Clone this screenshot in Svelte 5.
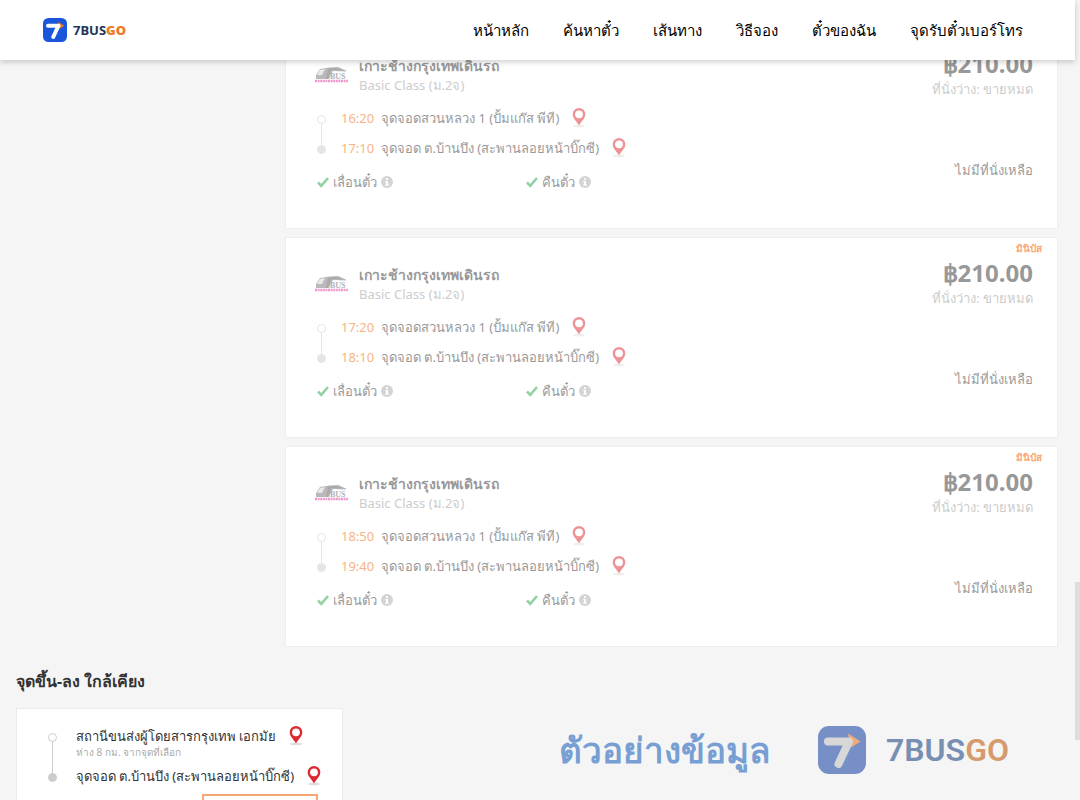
<script>
	const menu = ['หน้าหลัก', 'ค้นหาตั๋ว', 'เส้นทาง', 'วิธีจอง', 'ตั๋วของฉัน', 'จุดรับตั๋วเบอร์โทร'];

	const from = 'จุดจอดสวนหลวง 1 (ปั้มแก๊ส พีที)';
	const to = 'จุดจอด ต.บ้านบึง (สะพานลอยหน้าบิ๊กซี)';

	const trips = [
		{ depart: '16:20', arrive: '17:10' },
		{ depart: '17:20', arrive: '18:10' },
		{ depart: '18:50', arrive: '19:40' }
	];
</script>

{#snippet logo()}
	<svg class="logo-icon" viewBox="0 0 48 48" aria-hidden="true">
		<rect class="tile" width="48" height="48" rx="11" />
		<path d="M30 7.500l12.500 8-9.500 6z" fill="#f07a26" />
		<path class="seven" d="M10 15.500h21L20.500 38" fill="none" stroke-width="8" stroke-linecap="round" stroke-linejoin="round" />
	</svg>
{/snippet}

{#snippet pin()}
	<a class="pin" href="#map" aria-label="แผนที่">
		<svg viewBox="0 0 14 20">
			<ellipse cx="7" cy="18" rx="6" ry="1.5" fill="#e4dcda" />
			<path d="M7 0a6.300 6.300 0 0 0-6.300 6.300c0 4.200 3.800 6.700 6.300 11.200 2.500-4.500 6.300-7 6.300-11.200A6.300 6.300 0 0 0 7 0z" fill="#dc2a30" />
			<circle cx="7" cy="6.300" r="3.900" fill="#fff" />
		</svg>
	</a>
{/snippet}

{#snippet perk(label)}
	<div class="perk">
		<svg class="check" viewBox="0 0 12 12"><path d="M1 6.500l3.300 3.300L11 2" fill="none" stroke="#28a745" stroke-width="2.600" /></svg>
		<span>{label}</span>
		<svg class="info" viewBox="0 0 12 12">
			<circle cx="6" cy="6" r="6" fill="#aaa" />
			<path d="M5 2.300h2v1.700H5zM4.300 5H7v3.500h.8v1.200H4.200V8.500H5V6.200h-.7z" fill="#fff" />
		</svg>
	</div>
{/snippet}

<div class="page">
	<header>
		<a class="brand" href="#home">
			{@render logo()}
			<span>7BUS<b>GO</b></span>
		</a>
		<nav>
			{#each menu as item}
				<a href="#menu">{item}</a>
			{/each}
		</nav>
	</header>

	<main>
		<section class="results">
			{#each trips as trip}
				<article class="trip">
					<span class="type">มินิบัส</span>
					<div class="info-col">
						<div class="operator">
							<svg class="bus" viewBox="0 0 34 18" aria-hidden="true">
								<path d="M1 13V9L5 3l9-1.500 9-.5 8 3.500v1L18 5l-4 8z" fill="#77747a" />
								<path d="M5 4l5-1-3 6H2.500V8z" fill="#d5d3d7" />
								<path d="M13 2.500l8-.5 8 2.500-13-.5-3 9h-2z" fill="#555357" />
								<text x="15" y="12.500" font-size="8" font-weight="700" font-family="Liberation Serif, serif" fill="#66636a">BUS</text>
								<path d="M0 15h33" stroke="#e0359c" stroke-width="2.500" stroke-dasharray="2 .6" />
							</svg>
							<div>
								<h3>เกาะช้างกรุงเทพเดินรถ</h3>
								<p>Basic Class (ม.2จ)</p>
							</div>
						</div>
						<ol class="route">
							<li><time>{trip.depart}</time><span>{from}</span>{@render pin()}</li>
							<li><time>{trip.arrive}</time><span>{to}</span>{@render pin()}</li>
						</ol>
						<div class="perks">
							{@render perk('เลื่อนตั๋ว')}
							{@render perk('คืนตั๋ว')}
						</div>
					</div>
					<div class="fare">
						<strong>฿210.00</strong>
						<span class="seats">ที่นั่งว่าง: ขายหมด</span>
						<span class="sold-out">ไม่มีที่นั่งเหลือ</span>
					</div>
				</article>
			{/each}
		</section>

		<section class="nearby">
			<h2>จุดขึ้น-ลง ใกล้เคียง</h2>
			<div class="near-card">
				<ol class="route">
					<li>
						<span>สถานีขนส่งผู้โดยสารกรุงเทพ เอกมัย</span>{@render pin()}
						<small>ห่าง 8 กม. จากจุดที่เลือก</small>
					</li>
					<li><span>{to}</span>{@render pin()}</li>
				</ol>
				<button aria-label="ค้นหา"></button>
			</div>
		</section>
	</main>

	<div class="watermark">
		<span class="sample">ตัวอย่างข้อมูล</span>
		{@render logo()}
		<span class="name">7BUS<b>GO</b></span>
	</div>
	<div class="scrollbar"></div>
</div>

<style>
	:global(body) {
		background: #f5f5f5;
		font-family: 'Noto Sans', 'Open Sans', sans-serif;
		color: #333;
	}

	.page {
		position: relative;
		height: 100vh;
		overflow: hidden;
		font-size: 13px;
	}

	a {
		color: inherit;
		text-decoration: none;
	}

	h2, h3, p, ol {
		margin: 0;
		padding: 0;
	}

	header {
		position: absolute;
		top: 0;
		left: 0;
		right: 5px;
		z-index: 2;
		box-sizing: border-box;
		height: 60px;
		padding: 0 52px 0 43px;
		display: flex;
		align-items: center;
		justify-content: space-between;
		background: #fff;
		box-shadow: 0 2px 6px rgba(0, 0, 0, 0.2);
	}

	.brand {
		display: flex;
		align-items: center;
		gap: 6px;
		font-size: 13px;
		font-weight: 700;
		color: #1c3556;
	}

	.logo-icon {
		width: 24px;
		height: 24px;
	}

	.tile {
		fill: #1a56db;
	}

	.seven {
		stroke: #fff;
	}

	.brand b {
		color: #f07a26;
	}

	nav {
		display: flex;
		gap: 34px;
		font-size: 15px;
		line-height: 22px;
		color: #000;
	}

	main {
		padding: 28px 22px 0 16px;
	}

	.results {
		margin-left: 269px;
		display: grid;
		gap: 8px;
	}

	.trip {
		position: relative;
		box-sizing: border-box;
		height: 201px;
		padding: 27px 24px 0 29px;
		display: flex;
		justify-content: space-between;
		background: #fff;
		border: 1px solid #eee;
	}

	.type {
		position: absolute;
		top: 1px;
		right: 15px;
		font-size: 10px;
		line-height: 18px;
		font-weight: 700;
		color: #f9a878;
	}

	.info-col, .fare {
		opacity: 0.5;
	}

	.info-col {
		flex: 1;
	}

	.operator {
		display: flex;
		align-items: center;
		gap: 10px;
	}

	.bus {
		width: 34px;
		height: 18px;
	}

	h3 {
		font-size: 14px;
		line-height: 20px;
	}

	.operator p {
		line-height: 18px;
		color: #999;
	}

	.route {
		position: relative;
		list-style: none;
	}

	.trip .route {
		margin-top: 9px;
		padding-left: 26px;
	}

	.route li {
		position: relative;
		display: flex;
		align-items: center;
		line-height: 30px;
	}

	.route li::before {
		content: '';
		position: absolute;
		left: -24px;
		top: 12px;
		box-sizing: border-box;
		width: 9px;
		height: 9px;
		z-index: 1;
		border: 1px solid #ccc;
		border-radius: 50%;
		background: #fff;
	}

	.route li:last-child::before {
		background: #ccc;
	}

	.route li:first-child::after {
		content: '';
		position: absolute;
		left: -20px;
		top: 20px;
		width: 1px;
		height: 22px;
		background: #ccc;
	}

	time {
		width: 40px;
		color: #f26a00;
	}

	.pin {
		display: flex;
		margin-left: 13px;
	}

	.pin svg {
		width: 14px;
		height: 20px;
	}

	.perks {
		display: grid;
		grid-template-columns: 209px 209px;
		margin-top: 9px;
		padding-left: 2px;
	}

	.perk {
		display: flex;
		align-items: center;
		gap: 4px;
		line-height: 20px;
	}

	.check, .info {
		width: 12px;
		height: 12px;
	}

	.fare {
		display: flex;
		flex-direction: column;
		text-align: right;
		margin-top: -8px;
	}

	.fare strong {
		font-size: 24px;
		line-height: 32px;
	}

	.seats {
		line-height: 18px;
		color: #999;
	}

	.sold-out {
		margin-top: 63px;
		line-height: 18px;
	}

	.nearby {
		margin-top: 21px;
	}

	h2 {
		font-size: 16px;
		line-height: 26px;
	}

	.near-card {
		box-sizing: border-box;
		width: 327px;
		margin-top: 14px;
		padding: 12px 12px 12px 59px;
		background: #fff;
		border: 1px solid #eaeaea;
	}

	.near-card li {
		flex-wrap: wrap;
		align-content: start;
	}

	.near-card li:first-child {
		height: 40px;
	}

	.near-card li:first-child::after {
		height: 34px;
	}

	.near-card li::before {
		left: -28px;
	}

	.near-card li:first-child::after {
		left: -24px;
	}

	small {
		flex-basis: 100%;
		font-size: 10px;
		line-height: 12px;
		margin-top: -5px;
		color: #aaa;
	}

	button {
		display: block;
		width: 116px;
		height: 36px;
		margin: 3px 12px 0 auto;
		border: 2px solid #f5a673;
		background: #fff;
	}

	.watermark {
		position: absolute;
		right: 71px;
		bottom: 22px;
		display: flex;
		align-items: center;
		opacity: 0.6;
	}

	.sample {
		margin-right: 48px;
		font-size: 35px;
		line-height: 56px;
		font-weight: 700;
		color: #2467bd;
	}

	.watermark .logo-icon {
		width: 48px;
		height: 48px;
	}

	.watermark .tile {
		fill: #254daa;
	}

	.watermark .seven {
		stroke: #c4c4c4;
	}

	.name {
		margin-left: 20px;
		font-family: Roboto, sans-serif;
		font-size: 32px;
		font-weight: 600;
		color: #264c87;
	}

	.name b {
		font-weight: 600;
		color: #c06114;
	}

	.scrollbar {
		position: absolute;
		right: 0;
		top: 582px;
		width: 5px;
		height: 158px;
		background: #ddd;
	}
</style>
